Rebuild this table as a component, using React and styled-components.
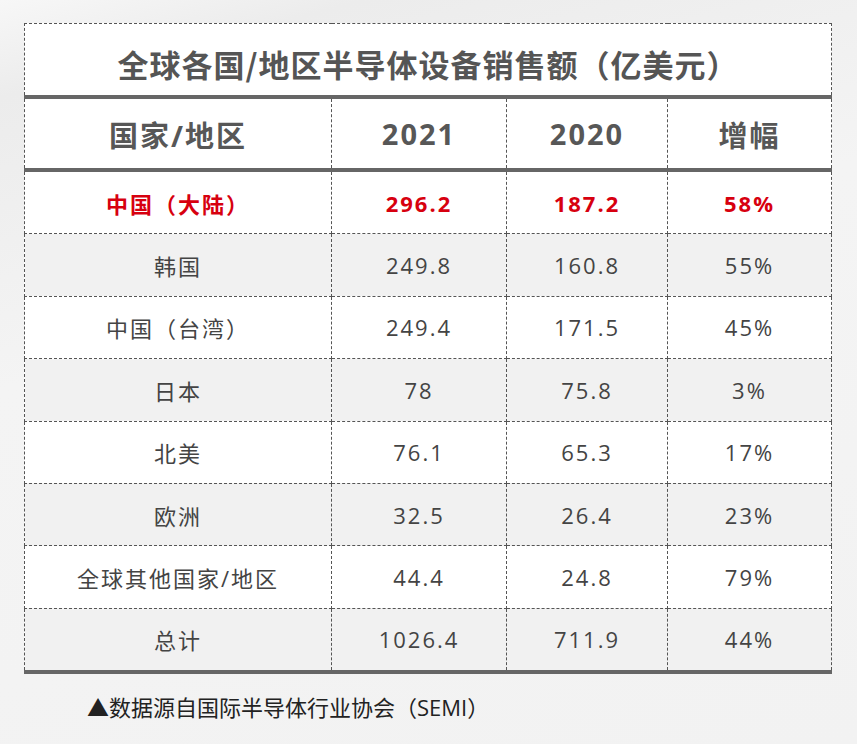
import React from "react";
import styled, { createGlobalStyle } from "styled-components";

const Global = createGlobalStyle`
  html, body { margin: 0; padding: 0; }
  body {
    width: 857px;
    height: 744px;
    overflow: hidden;
    background: #f3f3f3;
    font-family: "Open Sans", "Noto Sans CJK SC", sans-serif;
  }
`;

const Page = styled.div`
  width: 857px;
  height: 744px;
  box-sizing: border-box;
  padding: 23px 0 0 24px;
  background:
    linear-gradient(165deg, #f7f7f7 0%, #ececec 10%, #f4f4f4 40%, #f2f2f2 100%);
`;

const Table = styled.table`
  width: 807px;
  border-collapse: collapse;
  table-layout: fixed;
  background: #fff;
`;

const TitleCell = styled.th`
  height: 63px;
  padding: 8px 0 0;
  border: 1px dashed #555;
  border-bottom: 4px solid #666;
  font-family: "Noto Sans CJK SC", sans-serif;
  font-size: 31px;
  font-weight: 700;
  color: #555;
  letter-spacing: 1px;
  text-align: center;
  vertical-align: middle;
`;

const HeadCell = styled.th`
  height: 69px;
  padding: 0;
  border-left: 1px dashed #555;
  border-right: 1px dashed #555;
  border-bottom: 4px solid #666;
  font-family: "Open Sans", "Noto Sans CJK SC", sans-serif;
  font-size: 29px;
  font-weight: 700;
  color: #575757;
  letter-spacing: 2px;
  text-align: center;
  vertical-align: middle;
`;

const Row = styled.tr`
  background: ${(p) => (p.$shade ? "#f1f1f1" : "#fff")};
`;

const Cell = styled.td`
  height: 61.4px;
  padding: 0;
  border: 1px dashed #555;
  border-bottom: ${(p) => (p.$last ? "4px solid #666" : "1px dashed #555")};
  font-family: "Open Sans", "Noto Sans CJK SC", sans-serif;
  font-size: 22px;
  font-weight: ${(p) => (p.$hot ? 700 : 400)};
  color: ${(p) => (p.$hot ? "#d7000f" : "#444")};
  letter-spacing: 2px;
  text-align: center;
  vertical-align: middle;
`;

const Note = styled.p`
  margin: 16px 0 0 63px;
  font-family: "Open Sans", "Noto Sans CJK SC", sans-serif;
  font-size: 22px;
  color: #222;
`;

const rows = [
  ["中国（大陆）", "296.2", "187.2", "58%"],
  ["韩国", "249.8", "160.8", "55%"],
  ["中国（台湾）", "249.4", "171.5", "45%"],
  ["日本", "78", "75.8", "3%"],
  ["北美", "76.1", "65.3", "17%"],
  ["欧洲", "32.5", "26.4", "23%"],
  ["全球其他国家/地区", "44.4", "24.8", "79%"],
  ["总计", "1026.4", "711.9", "44%"],
];

export default function App() {
  return (
    <Page>
      <Global />
      <Table>
        <colgroup>
          <col style={{ width: 307 }} />
          <col style={{ width: 175 }} />
          <col style={{ width: 161 }} />
          <col style={{ width: 164 }} />
        </colgroup>
        <thead>
          <tr>
            <TitleCell colSpan={4}>全球各国/地区半导体设备销售额（亿美元）</TitleCell>
          </tr>
          <tr>
            <HeadCell>国家/地区</HeadCell>
            <HeadCell>2021</HeadCell>
            <HeadCell>2020</HeadCell>
            <HeadCell>增幅</HeadCell>
          </tr>
        </thead>
        <tbody>
          {rows.map((r, i) => (
            <Row key={r[0]} $shade={i % 2 === 1}>
              {r.map((c, j) => (
                <Cell key={j} $hot={i === 0} $last={i === rows.length - 1}>
                  {c}
                </Cell>
              ))}
            </Row>
          ))}
        </tbody>
      </Table>
      <Note>▲数据源自国际半导体行业协会（SEMI）</Note>
    </Page>
  );
}
